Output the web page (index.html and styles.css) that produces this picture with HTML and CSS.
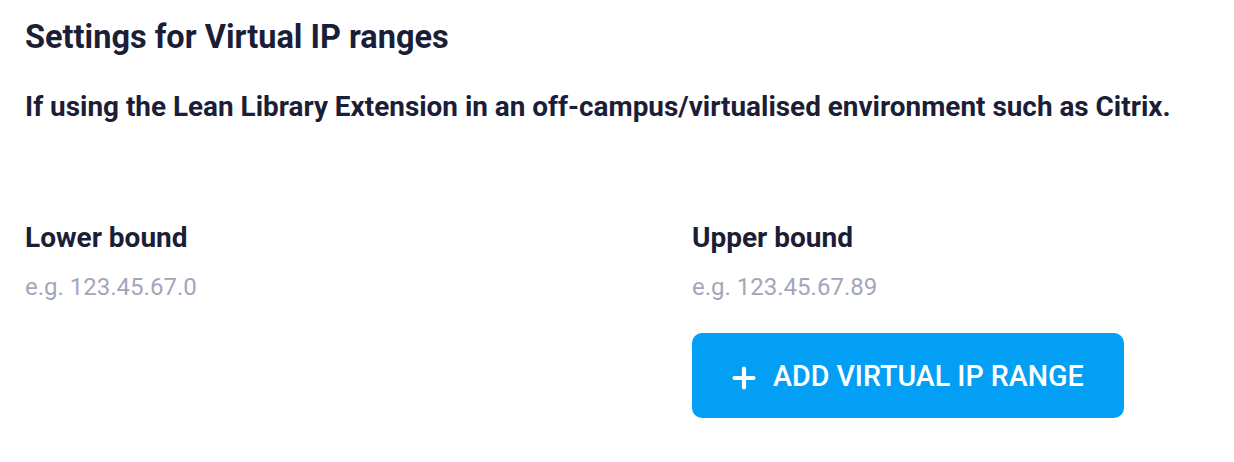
FILE: index.html
```html
<!DOCTYPE html>
<html>
<head>
<meta charset="utf-8">
<link rel="stylesheet" href="styles.css">
</head>
<body>
<div class="page">
  <h1 class="title">Settings for Virtual IP ranges</h1>
  <p class="subtitle">If using the Lean Library Extension in an off-campus/virtualised environment such as Citrix.</p>
  <div class="fields">
    <div class="field">
      <label class="label">Lower bound</label>
      <div class="placeholder">e.g. 123.45.67.0</div>
    </div>
    <div class="field">
      <label class="label">Upper bound</label>
      <div class="placeholder">e.g. 123.45.67.89</div>
      <button class="add-btn">
        <svg class="plus" width="24" height="24" viewBox="0 0 24 24"><path d="M12 2.5v19M2.5 12h19" stroke="#fff" stroke-width="4.2" stroke-linecap="round"/></svg>
        <span class="btn-text">ADD VIRTUAL IP RANGE</span>
      </button>
    </div>
  </div>
</div>
</body>
</html>
```
FILE: styles.css
```css
html, body {
  margin: 0;
  padding: 0;
  background: #fff;
}
body {
  font-family: Roboto, "Liberation Sans", sans-serif;
  color: #1b1e36;
}
.page {
  padding: 17px 25px 0 25px;
}
.title {
  margin: 0;
  font-size: 32.5px;
  font-weight: 700;
  line-height: 40px;
}
.subtitle {
  margin: 32px 0 0 0;
  font-size: 27.9px;
  font-weight: 700;
  line-height: 36px;
}
.fields {
  display: grid;
  grid-template-columns: 667px 1fr;
  margin-top: 95px;
}
.field {
  display: flex;
  flex-direction: column;
  align-items: flex-start;
}
.label {
  font-size: 28px;
  font-weight: 700;
  line-height: 36px;
}
.placeholder {
  margin-top: 16px;
  font-size: 24px;
  color: #a3a6ba;
  line-height: 30px;
}
.add-btn {
  margin-top: 31px;
  width: 432px;
  height: 85px;
  border: none;
  border-radius: 10px;
  background: #039ff5;
  color: #fff;
  font-family: Roboto, "Liberation Sans", sans-serif;
  font-size: 28.6px;
  font-weight: 500;
  display: flex;
  align-items: center;
  padding: 0 0 0 40px;
  gap: 17px;
}
.plus {
  display: block;
  margin-top: 4px;
}
```
